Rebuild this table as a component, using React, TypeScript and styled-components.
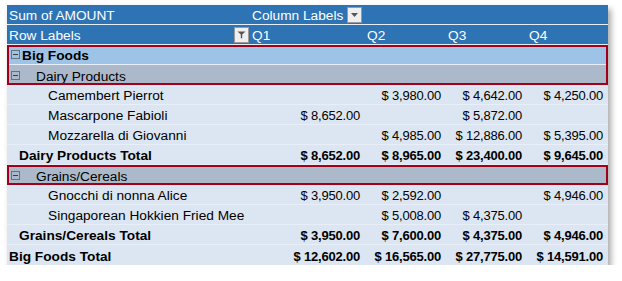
import React from "react";
import styled, { createGlobalStyle } from "styled-components";

const GlobalStyle = createGlobalStyle`
	body {
		margin: 0;
		background: #fff;
		font-family: "Liberation Sans", Arial, sans-serif;
	}
`;

const Page = styled.main`
	padding: 5px 0 0 7px;
`;

const Table = styled.div`
	width: 601px;
	background-color: #dce6f2;
	box-shadow: 3px 4px 6px rgba(0, 0, 0, 0.35);
	font-size: 13.7px;
	color: #000;
`;

const Row = styled.div<{ $kind?: string }>`
	display: grid;
	grid-template-columns: 243px 115px 81px 81px 81px;
	height: 20px;
	padding-top: 2px;
	box-sizing: border-box;
	align-items: center;
	white-space: nowrap;
	border-bottom: 1px solid
		${(p) => (p.$kind === "head" ? "#e6eef8" : p.$kind === "group" ? "#f2f5fa" : "#e9eff8")};
	background-color: ${(p) =>
		p.$kind === "head"
			? "#2e74b5"
			: p.$kind === "top"
			? "#9dc3e6"
			: p.$kind === "group"
			? "#acb9ca"
			: "#dce6f2"};
	color: ${(p) => (p.$kind === "head" ? "#fff" : "#000")};
	font-weight: ${(p) => (p.$kind === "top" || p.$kind === "total" ? "bold" : "normal")};

	&:last-child {
		border-bottom: none;
	}
`;

const Group = styled.div`
	outline: 2px solid #a0001a;
	outline-offset: -2px;
`;

const Label = styled.div<{ $indent: number }>`
	display: flex;
	align-items: center;
	padding-left: ${(p) => p.$indent}px;
	height: 100%;
`;

const HeadCell = styled.div<{ $start?: boolean }>`
	display: flex;
	align-items: center;
	justify-content: ${(p) => (p.$start ? "flex-start" : "space-between")};
	padding: 0 1px 0 2px;
	height: 100%;
`;

const Value = styled.div`
	text-align: right;
	padding-right: 5px;
	font-size: 13px;
	letter-spacing: -0.2px;
`;

const IconButton = styled.span`
	width: 15px;
	height: 16px;
	box-sizing: border-box;
	border: 1px solid #9a9a9a;
	background: #efefef;
	display: inline-flex;
	align-items: center;
	justify-content: center;
	margin: -2px 0 0 4px;
`;

const Collapse = styled.span<{ $gap: number }>`
	width: 9px;
	height: 9px;
	box-sizing: border-box;
	border: 1px solid #6f6f6f;
	display: inline-flex;
	align-items: center;
	justify-content: center;
	margin: -2px ${(p) => p.$gap}px 0 0;

	&::before {
		content: "";
		width: 5px;
		height: 1px;
		background: #3c3c3c;
	}
`;

const Funnel = () => (
	<svg width="9" height="9" viewBox="0 0 9 9">
		<path d="M0.5 1.5h8L5.2 4.6v3.6H3.8V4.6z" fill="#555" />
	</svg>
);

const Arrow = () => (
	<svg width="7" height="4" viewBox="0 0 7 4">
		<path d="M0 0h7L3.5 4z" fill="#555" />
	</svg>
);

type Line = {
	label: string;
	values: string[];
	kind?: string;
	indent: number;
};

const money = (v: string) => (v ? `$ ${v}` : "");

const dairy: Line[] = [
	{ label: "Camembert Pierrot", values: ["", "3,980.00", "4,642.00", "4,250.00"], indent: 41 },
	{ label: "Mascarpone Fabioli", values: ["8,652.00", "", "5,872.00", ""], indent: 41 },
	{ label: "Mozzarella di Giovanni", values: ["", "4,985.00", "12,886.00", "5,395.00"], indent: 41 },
	{ label: "Dairy Products Total", values: ["8,652.00", "8,965.00", "23,400.00", "9,645.00"], kind: "total", indent: 12 },
];

const grains: Line[] = [
	{ label: "Gnocchi di nonna Alice", values: ["3,950.00", "2,592.00", "", "4,946.00"], indent: 41 },
	{ label: "Singaporean Hokkien Fried Mee", values: ["", "5,008.00", "4,375.00", ""], indent: 41 },
	{ label: "Grains/Cereals Total", values: ["3,950.00", "7,600.00", "4,375.00", "4,946.00"], kind: "total", indent: 12 },
	{ label: "Big Foods Total", values: ["12,602.00", "16,565.00", "27,775.00", "14,591.00"], kind: "total", indent: 2 },
];

const DataRow = ({ line }: { line: Line }) => (
	<Row $kind={line.kind}>
		<Label $indent={line.indent}>{line.label}</Label>
		{line.values.map((v, i) => (
			<Value key={i}>{money(v)}</Value>
		))}
	</Row>
);

const App = () => {
	return (
		<Page>
			<GlobalStyle />
			<Table>
				<Row $kind="head">
					<Label $indent={2}>Sum of AMOUNT</Label>
					<HeadCell $start>
						Column Labels
						<IconButton>
							<Arrow />
						</IconButton>
					</HeadCell>
				</Row>
				<Row $kind="head">
					<HeadCell>
						Row Labels
						<IconButton>
							<Funnel />
						</IconButton>
					</HeadCell>
					<HeadCell>Q1</HeadCell>
					<HeadCell>Q2</HeadCell>
					<HeadCell>Q3</HeadCell>
					<HeadCell>Q4</HeadCell>
				</Row>
				<Group>
					<Row $kind="top">
						<Label $indent={4}>
							<Collapse $gap={2} />
							Big Foods
						</Label>
					</Row>
					<Row $kind="group">
						<Label $indent={4}>
							<Collapse $gap={16} />
							Dairy Products
						</Label>
					</Row>
				</Group>
				{dairy.map((l) => (
					<DataRow key={l.label} line={l} />
				))}
				<Group>
					<Row $kind="group">
						<Label $indent={4}>
							<Collapse $gap={16} />
							Grains/Cereals
						</Label>
					</Row>
				</Group>
				{grains.map((l) => (
					<DataRow key={l.label} line={l} />
				))}
			</Table>
		</Page>
	);
};

export default App;
